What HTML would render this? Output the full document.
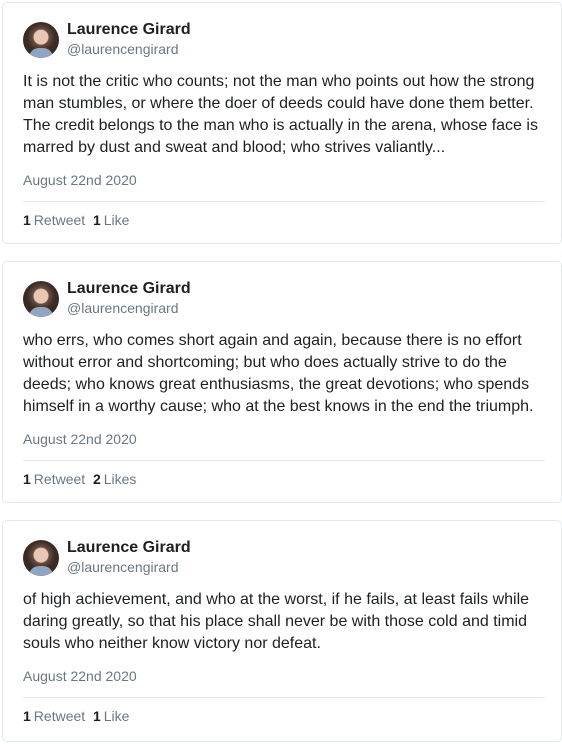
<!DOCTYPE html>
<html><head><meta charset="utf-8"><style>
html,body{margin:0;background:#fff;font-family:"Liberation Sans",sans-serif;width:562px;height:744px;overflow:hidden}
body{position:relative}
.card{position:absolute;left:2px;width:560px;border:1px solid #e1e8ed;border-radius:5px;box-sizing:border-box;height:242px}
.av{position:absolute;left:20px;top:19px;width:36px;height:36px;border-radius:50%;background:radial-gradient(circle at 50% 42%,#e8c8b4 0 7px,#6a4d3f 8px,#3b2c25 14px,#2a2522 100%);overflow:hidden}
.av:after{content:"";position:absolute;left:6px;top:26px;width:24px;height:14px;border-radius:10px 10px 0 0;background:#8fa5c0}
.name{position:absolute;left:64px;top:18px;font-weight:bold;font-size:16px;color:#1c2022}
.handle{position:absolute;left:64px;top:38px;font-size:14px;color:#697882}
.txt{position:absolute;left:20px;top:68px;width:525px;font-size:16px;line-height:22px;color:#1c2022}
.date{position:absolute;left:20px;top:169px;font-size:14px;color:#697882}
.hr{position:absolute;left:20px;right:16px;top:198px;border-top:1px solid #e1e8ed}
.stats{position:absolute;left:20px;top:209px;font-size:14px;color:#697882}
.stats b{color:#1c2022;margin-right:3px}
</style></head><body>
<div class="card" style="top:2px">
<div class="av"></div><div class="name">Laurence Girard</div><div class="handle">@laurencengirard</div>
<div class="txt">It is not the critic who counts; not the man who points out how the strong man stumbles, or where the doer of deeds could have done them better. The credit belongs to the man who is actually in the arena, whose face is marred by dust and sweat and blood; who strives valiantly...</div>
<div class="date">August 22nd 2020</div><div class="hr"></div>
<div class="stats"><b>1</b>Retweet&nbsp;&nbsp;<b>1</b>Like</div></div>
<div class="card" style="top:261px">
<div class="av"></div><div class="name">Laurence Girard</div><div class="handle">@laurencengirard</div>
<div class="txt">who errs, who comes short again and again, because there is no effort without error and shortcoming; but who does actually strive to do the deeds; who knows great enthusiasms, the great devotions; who spends himself in a worthy cause; who at the best knows in the end the triumph.</div>
<div class="date">August 22nd 2020</div><div class="hr"></div>
<div class="stats"><b>1</b>Retweet&nbsp;&nbsp;<b>2</b>Likes</div></div>
<div class="card" style="top:520px;height:222px">
<div class="av"></div><div class="name">Laurence Girard</div><div class="handle">@laurencengirard</div>
<div class="txt">of high achievement, and who at the worst, if he fails, at least fails while daring greatly, so that his place shall never be with those cold and timid souls who neither know victory nor defeat.</div>
<div class="date" style="top:147px">August 22nd 2020</div><div class="hr" style="top:176px"></div>
<div class="stats" style="top:187px"><b>1</b>Retweet&nbsp;&nbsp;<b>1</b>Like</div></div>
</body></html>
